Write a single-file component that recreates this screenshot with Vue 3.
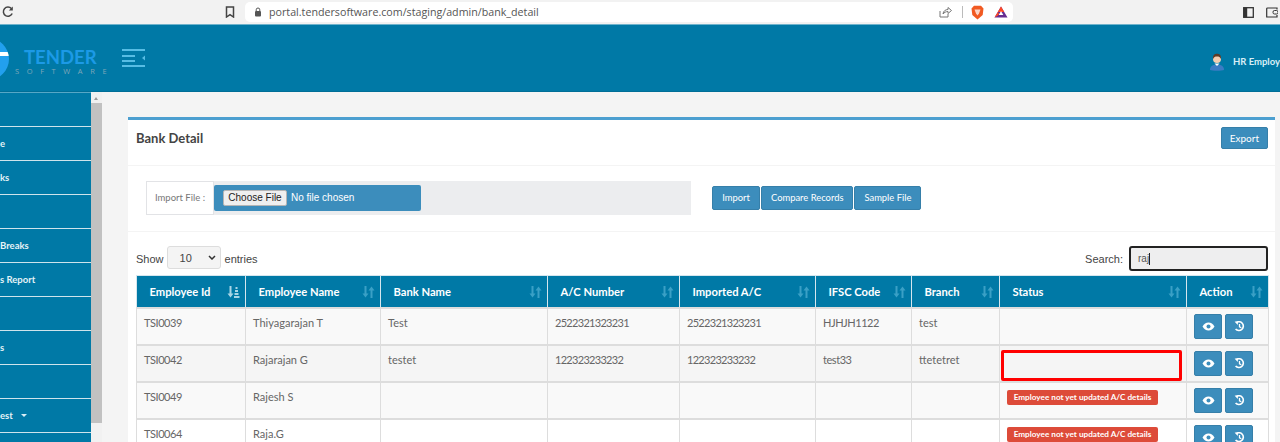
<template>
  <div class="page">
    <!-- browser bar -->
    <div class="chrome">
      <svg class="reload" width="14" height="14" viewBox="0 0 14 14"><path d="M11.2 8.500A4.600 4.600 0 1 1 10.400 3.600" fill="none" stroke="#444" stroke-width="1.500"/><path d="M11.800 1.400v4h-4z" fill="#444"/></svg>
      <svg class="bookmark" width="10" height="12" viewBox="0 0 10 12"><path d="M1.500 1h7v10L5 8.600 1.500 11z" fill="none" stroke="#444" stroke-width="1.500"/></svg>
      <div class="address">
        <svg width="8" height="10" viewBox="0 0 8 10"><rect x="1" y="4" width="6" height="5.500" rx="1" fill="#555"/><path d="M2.200 4V2.800a1.800 1.800 0 0 1 3.600 0V4" fill="none" stroke="#555"/></svg>
        <span class="url">portal.tendersoftware.com/staging/admin/bank_detail</span>
        <svg class="share" width="13" height="12" viewBox="0 0 13 12"><path d="M1 5v6h8V8M4 8c.3-3 2.500-4.500 5-4.500V1.500l3.500 3-3.500 3V5.500C7 5.500 5.200 6.500 4 8z" fill="none" stroke="#777"/></svg>
        <i class="sep"></i>
        <svg width="13" height="15" viewBox="0 0 13 15"><path d="M3 .8h7l2.500 2.700-.8 6.500-5.200 4.400L1.300 10 .5 3.500z" fill="#f15a22"/><path d="M3.500 4.500h6L8 8.500l-1.500 2-1.500-2z" fill="#fff" opacity=".75"/></svg>
        <svg class="bat" width="14" height="12" viewBox="0 0 14 12"><path d="M7 .5L13.500 11.500H.5z" fill="#662d91"/><path d="M7 .5L10.200 6H3.800z" fill="#ff4724"/><path d="M7 5l2.300 4H4.700z" fill="#fff"/><path d="M.5 11.500L3.800 6 5 8 4 9.500z" fill="#ff4724"/></svg>
      </div>
      <svg class="panel" width="11" height="11" viewBox="0 0 11 11"><rect x=".7" y=".7" width="9.600" height="9.600" fill="none" stroke="#333" stroke-width="1.300"/><rect x=".7" y=".7" width="3.500" height="9.600" fill="#333"/></svg>
      <svg class="wallet" width="12" height="11" viewBox="0 0 12 11"><path d="M11 2.500V1H1.500a.8.8 0 0 0-.8.800V10h10.300V8" fill="none" stroke="#333" stroke-width="1.200"/><rect x="7" y="3.500" width="5" height="3.500" rx="1.500" fill="none" stroke="#333"/></svg>
    </div>

    <!-- app header -->
    <header class="topbar">
      <div class="logo">
        <i class="disc"></i>
        <div class="wordmark">
          <div class="tender">TENDER</div>
          <div class="software">SOFTWARE</div>
        </div>
      </div>
      <svg class="menu" width="23" height="18" viewBox="0 0 23 18"><path d="M0 1h23M0 7h13M0 12h13M0 17h23" stroke="#57bde4" stroke-width="2"/><path d="M23 6.500v5l-3-2.500z" fill="#57bde4"/></svg>
      <div class="user">
        <svg width="16" height="18" viewBox="0 0 16 18"><path d="M1 17c0-4 3-5.500 7-5.500s7 1.500 7 5.500c-2 1-12 1-14 0z" fill="#3b7cc4"/><circle cx="8" cy="6" r="4" fill="#f3cdb0"/><path d="M4 6C3.500 2 6 .8 8 .8s4.500 1.200 4 5.200C11 4 10 3.500 8 3.500S5 4 4 6z" fill="#5b3a26"/><path d="M5.500 10.500h5L8 13z" fill="#fff"/></svg>
        <span>HR Employ</span>
      </div>
    </header>

    <div class="body">
      <nav class="side">
        <div v-for="(item, i) in navItems" :key="i" class="nav-item">
          {{ item }}<span v-if="item === 'est'" class="caret"></span>
        </div>
      </nav>
      <div class="scrollbar">
        <span class="arrow"></span>
        <div class="thumb"></div>
      </div>

      <main class="content">
        <section class="card">
          <div class="card-head">
            <h3>Bank Detail</h3>
            <button class="btn">Export</button>
          </div>

          <div class="import-row">
            <div class="input-group">
              <span class="addon">Import File :</span>
              <div class="file-box">
                <span class="choose">Choose File</span>
                <span class="nofile">No file chosen</span>
              </div>
            </div>
            <div class="import-btns">
              <button class="btn">Import</button>
              <button class="btn">Compare Records</button>
              <button class="btn">Sample File</button>
            </div>
          </div>

          <div class="table-tools">
            <label class="tool">
              Show
              <span class="select">10<svg width="8" height="5" viewBox="0 0 8 5"><path d="M1 1l3 3 3-3" fill="none" stroke="#333" stroke-width="1.500"/></svg></span>
              entries
            </label>
            <label class="tool">
              Search:
              <span class="search">raj<i class="cursor"></i></span>
            </label>
          </div>

          <table class="grid">
            <colgroup>
              <col v-for="c in columns" :key="c.name" :style="{ width: c.width + 'px' }" />
            </colgroup>
            <thead>
              <tr>
                <th v-for="(c, i) in columns" :key="c.name">
                  <div class="th-inner">
                    {{ c.name }}
                    <svg v-if="i === 0" class="sort active" width="13" height="12" viewBox="0 0 13 12">
                      <path d="M2.500 0h2v7.500H6.500L3.500 11.500.5 7.500h2z" fill="currentColor"/>
                      <path d="M8.500 1h2v2h-2zM8 4h3v2H8zM7.500 7h4v2h-4zM7 10h5.500v2H7z" fill="currentColor"/>
                    </svg>
                    <svg v-else class="sort" width="13" height="12" viewBox="0 0 13 12">
                      <path d="M2.500 0h2v7.500H6.500L3.500 11.500.5 7.500h2z" fill="currentColor"/>
                      <path d="M8.500 12h2V4.500h2L9.500 .5l-3 4h2z" fill="currentColor"/>
                    </svg>
                  </div>
                </th>
              </tr>
            </thead>
            <tbody>
              <tr v-for="row in rows" :key="row.id">
                <td class="tight">{{ row.id }}</td>
                <td>{{ row.name }}</td>
                <td>{{ row.bank }}</td>
                <td class="digits">{{ row.number }}</td>
                <td class="digits">{{ row.imported }}</td>
                <td class="tight">{{ row.ifsc }}</td>
                <td>{{ row.branch }}</td>
                <td class="status">
                  <span v-if="!row.bank" class="badge">Employee not yet updated A/C details</span>
                  <i v-if="row.id === 'TSI0042'" class="highlight"></i>
                </td>
                <td class="actions">
                  <button class="btn icon">
                    <svg width="13" height="9" viewBox="0 0 13 9"><path d="M.5 4.500C2 1.800 4 .5 6.500 .5s4.500 1.300 6 4c-1.500 2.700-3.500 4-6 4s-4.500-1.300-6-4z" fill="#fff"/><circle cx="6.500" cy="4.500" r="2" fill="#3c8dbc"/></svg>
                  </button>
                  <button class="btn icon">
                    <svg width="11" height="11" viewBox="0 0 11 11"><path d="M2 1.800A4.400 4.400 0 1 1 1.600 8" fill="none" stroke="#fff" stroke-width="1.600"/><path d="M.6 .6h3.300v3.300z" fill="#fff"/><path d="M5.500 3v2.800l1.800 1" fill="none" stroke="#fff" stroke-width="1.300"/></svg>
                  </button>
                </td>
              </tr>
            </tbody>
          </table>
        </section>
      </main>
    </div>
  </div>
</template>

<script setup>
const navItems = ['', 'e', 'ks', '', 'Breaks', 's Report', '', 's', '', 'est', '']

const columns = [
  { name: 'Employee Id', width: 109 },
  { name: 'Employee Name', width: 135 },
  { name: 'Bank Name', width: 167 },
  { name: 'A/C Number', width: 132 },
  { name: 'Imported A/C', width: 136 },
  { name: 'IFSC Code', width: 96 },
  { name: 'Branch', width: 88 },
  { name: 'Status', width: 187 },
  { name: 'Action', width: 82 }
]

const rows = [
  { id: 'TSI0039', name: 'Thiyagarajan T', bank: 'Test', number: '2522321323231', imported: '2522321323231', ifsc: 'HJHJH1122', branch: 'test' },
  { id: 'TSI0042', name: 'Rajarajan G', bank: 'testet', number: '122323233232', imported: '122323233232', ifsc: 'test33', branch: 'ttetetret' },
  { id: 'TSI0049', name: 'Rajesh S', bank: '', number: '', imported: '', ifsc: '', branch: '' },
  { id: 'TSI0064', name: 'Raja.G', bank: '', number: '', imported: '', ifsc: '', branch: '' }
]
</script>

<style>
html, body {
  margin: 0;
  overflow: hidden;
}
</style>

<style scoped>
.page {
  width: 1280px;
  height: 442px;
  overflow: hidden;
  background: #f4f4f4;
  font-family: Lato, "Open Sans", sans-serif;
  color: #333;
}

.chrome {
  height: 25px;
  background: #f2f2f2;
  display: flex;
  align-items: center;
  padding-left: 1px;
  box-sizing: border-box;
  border-bottom: 1px solid #6fb3cc;
}
.bookmark {
  margin-left: 210px;
}
.address {
  width: 768px;
  height: 20px;
  margin-left: 10px;
  padding-left: 9px;
  box-sizing: border-box;
  background: #fff;
  border-radius: 5px;
  display: flex;
  align-items: center;
}
.url {
  margin-left: 7px;
  width: 658px;
  font-family: "Open Sans", sans-serif;
  font-size: 10.700px;
  color: #555;
  white-space: nowrap;
}
.share {
  margin-left: 12px;
}
.sep {
  width: 1px;
  height: 12px;
  background: #bbb;
  margin: 0 8px 0 10px;
}
.bat {
  margin-left: 10px;
}
.panel {
  margin-left: 230px;
}
.wallet {
  margin-left: 12px;
}

.topbar {
  height: 67px;
  background: #0079a6;
  display: flex;
  align-items: center;
  box-sizing: border-box;
  border-bottom: 1px solid #006e97;
}
.logo {
  width: 122px;
  height: 100%;
  position: relative;
  overflow: hidden;
}
.disc {
  position: absolute;
  left: -33px;
  top: 13px;
  width: 42px;
  height: 42px;
  border-radius: 50%;
  background: linear-gradient(#22a0ee 0 33%, #fff 33% 43%, #22a0ee 43%);
}
.wordmark {
  position: absolute;
  left: 15px;
  top: 22px;
}
.tender {
  margin-left: 9px;
  font-size: 18.500px;
  line-height: 20px;
  font-weight: 700;
  color: #1c9ae6;
}
.software {
  font-family: "Open Sans", sans-serif;
  font-size: 7.500px;
  line-height: 9px;
  letter-spacing: 7.600px;
  color: #7fa6b8;
}
.user {
  margin-left: auto;
  flex: none;
  display: flex;
  align-items: center;
  gap: 8px;
  font-size: 9.500px;
  font-weight: 700;
  color: #d8eef6;
  white-space: nowrap;
  margin-top: 7px;
}
.user svg {
  flex: none;
}

.body {
  display: flex;
  height: 350px;
}
.side {
  width: 91px;
  background: #0079a6;
  border-top: 1px solid #57a7c6;
  flex: none;
}
.nav-item {
  height: 34px;
  box-sizing: border-box;
  border-bottom: 1px solid #cfe4ec;
  display: flex;
  align-items: center;
  gap: 8px;
  padding-bottom: 1px;
  font-size: 9.500px;
  font-weight: 700;
  color: #e4f2f7;
  white-space: pre;
}
.caret {
  border: 3px solid transparent;
  border-top-color: #d8eef6;
  border-bottom: 0;
}

.scrollbar {
  width: 11px;
  flex: none;
  background: #f1f1f1;
  padding-top: 11px;
  position: relative;
}
.arrow {
  position: absolute;
  left: 3px;
  top: 5px;
  border: 2.500px solid transparent;
  border-bottom: 3px solid #999;
  border-top: 0;
}
.thumb {
  height: 320px;
  background: #c1c1c1;
}

.content {
  flex: 1;
  padding: 25px 5px 0 26px;
  min-width: 0;
}
.card {
  background: #fff;
  border-top: 3px solid #4c9fd0;
  height: 340px;
  overflow: hidden;
  padding: 0 7px 0 8px;
}
.card-head {
  height: 46px;
  display: flex;
  align-items: center;
  justify-content: space-between;
  border-bottom: 1px solid #f4f4f4;
  margin: 0 -7px 0 -8px;
  padding: 0 7px 10px 8px;
  box-sizing: border-box;
}
.card-head h3 {
  margin: 0;
  font-size: 13px;
  font-weight: 700;
  color: #444;
}
.btn {
  border: 1px solid #367fa9;
  background: #3c8dbc;
  color: #fff;
  border-radius: 2px;
  font-family: Lato, sans-serif;
  font-size: 10px;
  height: 24px;
  padding: 0 8.500px;
  cursor: pointer;
}
.card-head .btn {
  height: 22px;
  padding: 0 8px;
}

.import-row {
  height: 66px;
  display: flex;
  align-items: center;
  border-bottom: 1px solid #f4f4f4;
  margin: 0 -7px 0 -8px;
  padding: 0 0 2px 18px;
  box-sizing: border-box;
}
.input-group {
  width: 545px;
  height: 34px;
  display: flex;
  align-items: center;
  background: #ecedef;
}
.addon {
  width: 68px;
  height: 34px;
  flex: none;
  box-sizing: border-box;
  border: 1px solid #e2e3e6;
  background: #fff;
  font-size: 9.500px;
  color: #777;
  display: flex;
  align-items: center;
  justify-content: center;
}
.file-box {
  width: 207px;
  height: 26px;
  background: #3c8dbc;
  border-radius: 2px;
  display: flex;
  align-items: center;
  padding-left: 9px;
  box-sizing: border-box;
  font-family: "Liberation Sans", sans-serif;
  font-size: 10px;
  color: #fff;
}
.choose {
  height: 16px;
  line-height: 14px;
  width: 64px;
  flex: none;
  box-sizing: border-box;
  text-align: center;
  background: #efefef;
  border: 1px solid #b5b5b5;
  border-radius: 2px;
  color: #222;
  margin-right: 4px;
}
.import-btns {
  display: flex;
  gap: 1px;
  margin-left: 21px;
}
.import-btns .btn {
  font-size: 9.400px;
  padding: 0 9px;
  min-width: 48px;
}

.table-tools {
  height: 43px;
  display: flex;
  align-items: flex-end;
  justify-content: space-between;
  padding-bottom: 4px;
  box-sizing: border-box;
}
.tool {
  display: flex;
  align-items: center;
  gap: 4px;
  font-family: "Liberation Sans", sans-serif;
  font-size: 11px;
  color: #444;
}
.select {
  width: 54px;
  height: 23px;
  margin: 0 0 2px -1px;
  box-sizing: border-box;
  border: 1px solid #ddd;
  border-radius: 3px;
  background: #f4f4f4;
  display: flex;
  align-items: center;
  justify-content: space-between;
  padding: 0 4px 0 12px;
  font-size: 11px;
}
.search {
  width: 139px;
  height: 25px;
  margin-left: 2px;
  box-sizing: border-box;
  border: 2px solid #222;
  border-radius: 3px;
  background: #eeeeef;
  display: flex;
  align-items: center;
  padding-left: 7px;
  font-size: 10px;
  color: #555;
}
.cursor {
  width: 1px;
  height: 12px;
  background: #222;
}

.grid {
  width: 1132px;
  table-layout: fixed;
  border-collapse: collapse;
  font-size: 11px;
}
.grid th,
.grid td {
  border: 1px solid #ddd;
  padding: 0;
}
.grid th {
  height: 31px;
  background: #0079a6;
  color: #fff;
  text-align: left;
  font-size: 11.200px;
  font-weight: 700;
  border-color: #d5e6ee;
}
.th-inner {
  display: flex;
  align-items: center;
  justify-content: space-between;
  padding: 0 5px 0 12.500px;
  white-space: nowrap;
}
.sort {
  color: #3aa0c6;
  flex: none;
}
.sort.active {
  color: #a8d5e6;
}
.grid td {
  height: 37px;
  vertical-align: top;
  padding: 7px 7px 0;
  box-sizing: border-box;
  color: #666;
  line-height: 14px;
  border-width: 2px 1px 1px;
}
.grid td.digits {
  letter-spacing: -.7px;
}
.grid td.tight {
  letter-spacing: -.45px;
}
.grid tbody tr:nth-child(odd) td {
  background: #f9f9f9;
}
.grid tbody tr:nth-child(2) td {
  background: #f5f5f5;
}
.grid tbody tr:nth-child(4) td {
  background: #fff;
}
.grid td.status {
  position: relative;
}
.badge {
  display: block;
  width: 151px;
  height: 15px;
  background: #dd4b39;
  border-radius: 2px;
  color: #fff;
  font-size: 8.200px;
  font-weight: 700;
  line-height: 15px;
  text-align: center;
  white-space: nowrap;
}
.highlight {
  position: absolute;
  left: 1px;
  top: 4px;
  width: 181px;
  height: 31px;
  box-sizing: border-box;
  border: 3px solid #f00;
  border-radius: 2px;
}
.grid td.actions {
  padding: 5px 0 0 7px;
  white-space: nowrap;
}
.btn.icon {
  width: 28px;
  height: 25px;
  padding: 0;
  margin-right: 3px;
  vertical-align: top;
  display: inline-flex;
  align-items: center;
  justify-content: center;
}
</style>
